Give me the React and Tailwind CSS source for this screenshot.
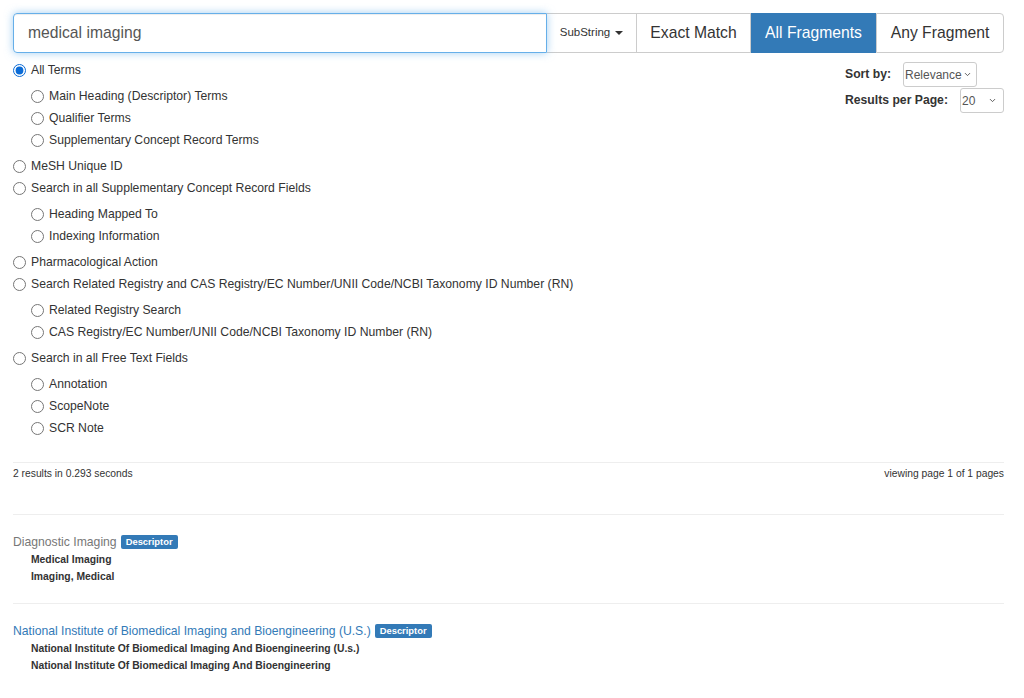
import { ChevronDown } from "lucide-react";

const options = [
  { label: "All Terms", checked: true, children: ["Main Heading (Descriptor) Terms", "Qualifier Terms", "Supplementary Concept Record Terms"] },
  { label: "MeSH Unique ID" },
  { label: "Search in all Supplementary Concept Record Fields", children: ["Heading Mapped To", "Indexing Information"] },
  { label: "Pharmacological Action" },
  {
    label: "Search Related Registry and CAS Registry/EC Number/UNII Code/NCBI Taxonomy ID Number (RN)",
    children: ["Related Registry Search", "CAS Registry/EC Number/UNII Code/NCBI Taxonomy ID Number (RN)"],
  },
  { label: "Search in all Free Text Fields", children: ["Annotation", "ScopeNote", "SCR Note"] },
];

const results = [
  { title: "Diagnostic Imaging", muted: true, terms: ["Medical Imaging", "Imaging, Medical"] },
  {
    title: "National Institute of Biomedical Imaging and Bioengineering (U.S.)",
    terms: ["National Institute Of Biomedical Imaging And Bioengineering (U.s.)", "National Institute Of Biomedical Imaging And Bioengineering"],
  },
];

function Radio({ label, checked }) {
  return (
    <label className="flex items-center h-[22px] gap-[5px] text-[12.2px] text-[#333]">
      <input type="radio" name="field" defaultChecked={checked} className="w-[13px] h-[13px] m-0 accent-[#0b6bd6]" />
      {label}
    </label>
  );
}

export default function App() {
  return (
    <div className="w-[1024px] h-[698px] bg-white pl-[13px] pr-[20px] pt-[13px] overflow-hidden" style={{ fontFamily: '"Liberation Sans", Arial, sans-serif' }}>
      {/* search bar */}
      <div className="flex h-[40px]">
        <input
          defaultValue="medical imaging"
          className="flex-1 min-w-0 h-full px-[14px] text-[15.7px] text-[#555] border border-[#66afe9] rounded-l-[4px] outline-none shadow-[inset_0_1px_1px_rgba(0,0,0,0.075),0_0_8px_rgba(102,175,233,0.6)] relative z-10"
        />
        <button className="w-[89px] flex items-center justify-center gap-[5px] text-[11.5px] text-[#333] border-y border-[#ccc]">
          SubString
          <span className="w-0 h-0 border-x-[4px] border-x-transparent border-t-[4px] border-t-[#333]" />
        </button>
        <button className="w-[115px] text-[15.7px] text-[#333] border border-[#ccc]">Exact Match</button>
        <button className="w-[125px] text-[15.7px] text-white bg-[#337ab7] border-y border-[#337ab7]">All Fragments</button>
        <button className="w-[128px] text-[15.7px] text-[#333] border border-[#ccc] rounded-r-[4px]">Any Fragment</button>
      </div>

      <div className="flex justify-between mt-[6px]">
        <div>
          {options.map((o) => (
            <div key={o.label}>
              <Radio label={o.label} checked={o.checked} />
              {o.children && (
                <div className="pl-[18px] my-[4px]">
                  {o.children.map((c) => (
                    <Radio key={c} label={c} />
                  ))}
                </div>
              )}
            </div>
          ))}
        </div>

        <div className="w-[159px] shrink-0 flex flex-col gap-[1px] pt-[3px] text-[12.2px] text-[#333]">
          <div className="flex items-center">
            <span className="font-bold w-[58px] whitespace-nowrap">Sort by:</span>
            <div className="h-[25px] w-[74px] flex items-center justify-between pl-[1px] pr-[4px] border border-[#ccc] rounded-[3px] text-[#555] text-[12px]">
              Relevance
              <ChevronDown size={9} strokeWidth={2.5} className="text-[#555]" />
            </div>
          </div>
          <div className="flex items-center">
            <span className="font-bold w-[115px] whitespace-nowrap">Results per Page:</span>
            <div className="h-[25px] w-[44px] flex items-center justify-between pl-[1px] pr-[6px] border border-[#ccc] rounded-[3px] text-[#555] text-[12px]">
              20
              <ChevronDown size={9} strokeWidth={2.5} className="text-[#555]" />
            </div>
          </div>
        </div>
      </div>

      <div className="mt-[19px] border-t border-[#eee] flex justify-between pt-[3px] text-[10.3px] text-[#333]">
        <span>2 results in 0.293 seconds</span>
        <span>viewing page 1 of 1 pages</span>
      </div>

      <div className="mt-[33px]">
        {results.map((r) => (
          <div key={r.title} className="border-t border-[#eee] pt-[18px] pb-[18px]">
            <div className="flex items-center gap-[4px] h-[18px]">
              <span className={`text-[12.2px] ${r.muted ? "text-[#777]" : "text-[#337ab7]"}`}>{r.title}</span>
              <span className="bg-[#337ab7] text-white text-[9.4px] font-bold px-[5px] h-[14px] leading-[14px] rounded-[2px]">Descriptor</span>
            </div>
            <div className="pl-[18px] text-[10.35px] font-bold text-[#333]">
              {r.terms.map((t) => (
                <div key={t} className="h-[17px] leading-[17px]">{t}</div>
              ))}
            </div>
          </div>
        ))}
      </div>
    </div>
  );
}
